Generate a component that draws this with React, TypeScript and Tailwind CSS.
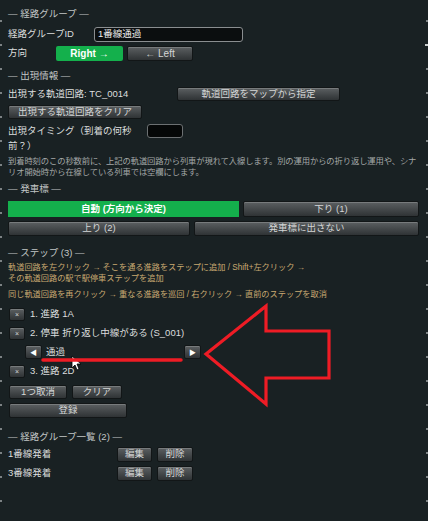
import type { ReactNode } from "react"
import clsx from "clsx"

const ticks = Array.from({ length: 21 }, (_, i) => i)

function Btn({ className, children }: { className?: string; children?: ReactNode }) {
	return (
		<div
			className={clsx(
				"flex shrink-0 items-center justify-center rounded-[2px] border border-[#121617] bg-linear-to-b from-[#5c6062] to-[#2f3335] text-[#d4d6d6] shadow-[inset_0_1px_0_rgba(255,255,255,0.18)]",
				className,
			)}
		>
			{children}
		</div>
	)
}

function Heading({ className, children }: { className?: string; children: ReactNode }) {
	return <div className={clsx("h-[13px] leading-[13px] text-[#c2c6c6]", className)}>— {children} —</div>
}

function StepRow({ className, label }: { className?: string; label: string }) {
	return (
		<div className={clsx("flex h-[13px] items-center gap-[5px] pl-px", className)}>
			<Btn className="h-[13px] w-[16px] text-[7px] leading-none">×</Btn>
			<span>{label}</span>
		</div>
	)
}

function GroupRow({ name }: { name: string }) {
	return (
		<div className="mt-[4px] flex h-[15px] items-center">
			<span className="w-[109px]">{name}</span>
			<Btn className="h-[15px] w-[35px]">編集</Btn>
			<Btn className="ml-[5px] h-[15px] w-[36px]">削除</Btn>
		</div>
	)
}

export default function App() {
	return (
		<div className="relative h-[521px] w-[428px] overflow-hidden bg-[#192123] font-['Liberation_Sans','Noto_Sans_CJK_JP',sans-serif] text-[9.5px] text-[#dcdede]">
			{/* edge ticks of the panel frame */}
			<div className="absolute left-0 top-[20px] flex flex-col gap-[22px]">
				{ticks.map((i) => (
					<div key={i} className="h-[2px] w-[2px] bg-[#7c8284]" />
				))}
			</div>
			<div className="absolute right-0 top-[20px] flex flex-col items-end gap-[22px]">
				{ticks.map((i) => (
					<div key={i} className={i === 1 ? "h-[2px] w-[3px] bg-[#c8cccc]" : "h-[2px] w-[2px] bg-[#7c8284]"} />
				))}
			</div>

			<div className="flex flex-col pl-2 pr-[9px] pt-[7px]">
				<Heading>経路グループ</Heading>

				<div className="mt-[7px] flex h-[15px] items-center">
					<span className="w-[86px]">経路グループID</span>
					<div className="flex h-[15px] w-[149px] items-center rounded-[3px] border border-[#8a8e90] bg-[#0b0e0f] pl-[3px] text-[#eeeeee]">
						1番線通過
					</div>
				</div>

				<div className="mt-[4px] flex h-[15px] items-center">
					<span className="w-[48px]">方向</span>
					<div className="flex h-[15px] w-[67px] items-center justify-center rounded-[2px] bg-[#14b04c] text-[10px] font-bold text-white">
						Right →
					</div>
					<Btn className="ml-[4px] h-[15px] w-[66px] text-[10px]">← Left</Btn>
				</div>

				<Heading className="mt-[8px]">出現情報</Heading>

				<div className="mt-[5px] flex h-[14px] items-center">
					<span className="w-[169px]">出現する軌道回路: TC_0014</span>
					<Btn className="h-[14px] w-[163px]">軌道回路をマップから指定</Btn>
				</div>

				<Btn className="mt-[4px] h-[14px] w-[134px]">出現する軌道回路をクリア</Btn>

				<div className="mt-[4px] flex items-start">
					<span className="w-[139px] leading-[15px]">
						出現タイミング（到着の何秒
						<br />
						前？）
					</span>
					<div className="mt-px h-[14px] w-[36px] rounded-[3px] border border-[#6c7072] bg-[#050707]" />
				</div>

				<div className="mt-[3px] whitespace-nowrap text-[8.3px] leading-[11px] tracking-[-0.1px] text-[#a4a8a8]">
					到着時刻のこの秒数前に、上記の軌道回路から列車が現れて入線します。別の運用からの折り返し運用や、シナ
					<br />
					リオ開始時から在線している列車では空欄にします。
				</div>

				<Heading className="mt-[4px]">発車標</Heading>

				<div className="mt-[6px] flex h-[16px] gap-[4px]">
					<div className="flex w-[231px] items-center justify-center bg-[#14b04c] font-bold text-white">自動 (方向から決定)</div>
					<Btn className="h-[16px] flex-1">下り (1)</Btn>
				</div>
				<div className="mt-[4px] flex h-[15px] gap-[4px]">
					<Btn className="h-[15px] w-[182px]">上り (2)</Btn>
					<Btn className="h-[15px] flex-1">発車標に出さない</Btn>
				</div>

				<Heading className="mt-[10px]">ステップ (3)</Heading>

				<div className="mt-[3px] whitespace-nowrap text-[8.2px] leading-[11px] text-[#c9aa72]">
					軌道回路を左クリック → そこを通る進路をステップに追加 / Shift+左クリック →
					<br />
					その軌道回路の駅で駅停車ステップを追加
				</div>
				<div className="mt-[5px] whitespace-nowrap text-[8.2px] leading-[11px] text-[#c9aa72]">
					同じ軌道回路を再クリック → 重なる進路を巡回 / 右クリック → 直前のステップを取消
				</div>

				<StepRow className="mt-[8px]" label="1. 進路 1A" />
				<StepRow className="mt-[6px]" label="2. 停車 折り返し中線がある (S_001)" />

				<div className="mt-[5px] flex h-[14px] items-center pl-[17px]">
					<Btn className="h-[14px] w-[17px] text-[7px] leading-none text-white">◀</Btn>
					<span className="w-[142px] pl-[4px]">通過</span>
					<Btn className="h-[14px] w-[17px] text-[7px] leading-none text-white">▶</Btn>
				</div>

				<StepRow className="mt-[6px]" label="3. 進路 2D" />

				<div className="mt-[7px] flex h-[14px] gap-[5px] pl-px">
					<Btn className="h-[14px] w-[58px]">1つ取消</Btn>
					<Btn className="h-[14px] w-[50px]">クリア</Btn>
				</div>
				<Btn className="ml-px mt-[4px] h-[15px] w-[118px]">登録</Btn>

				<Heading className="mt-[12px]">経路グループ一覧 (2)</Heading>

				<GroupRow name="1番線発着" />
				<GroupRow name="3番線発着" />
			</div>

			{/* red callout drawn over the step list */}
			<svg className="pointer-events-none absolute left-0 top-0" width="428" height="521" viewBox="0 0 428 521">
				<path d="M72 356 L72 368 L75 365 L77 370 L79 369 L77 364 L81 364 Z" fill="#ffffff" stroke="#000000" strokeWidth="0.8" />
				<line x1="43" y1="360" x2="181" y2="360" stroke="#ee1c25" strokeWidth="3.5" strokeLinecap="round" />
				<path
					d="M206 354 L266 306 L266 331 L329 331 L329 378 L266 378 L266 404 Z"
					fill="none"
					stroke="#ee1c25"
					strokeWidth="3.2"
					strokeLinejoin="miter"
				/>
			</svg>
		</div>
	)
}
